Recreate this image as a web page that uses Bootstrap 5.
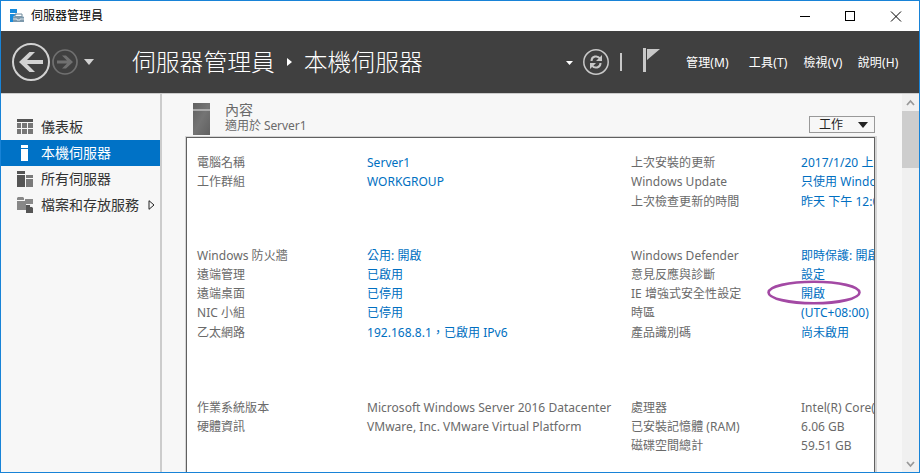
<!DOCTYPE html>
<html lang="zh-Hant">
<head>
<meta charset="utf-8">
<meta name="viewport" content="width=device-width, initial-scale=1">
<title>伺服器管理員</title>
<link href="https://cdn.jsdelivr.net/npm/bootstrap@5.3.0/dist/css/bootstrap.min.css" rel="stylesheet">
<style>
html,body{height:100%}
body{font-family:"Noto Sans","Noto Sans CJK TC",sans-serif;font-size:12px;line-height:19px;color:#6a6a6a;overflow:hidden;white-space:nowrap}
svg{display:block;flex:none}
.window{width:920px;height:473px;border:1px solid #1883d7;background:#f7f7f7}
.titlebar{height:30px;background:#fff;color:#000;padding:0 17px 0 9px}
.caption-text{margin-left:6px;position:relative;top:-1px}
.toolbar{height:62px;background:#404040;color:#fff;padding-left:10px}
.crumb{font-size:23.8px;font-weight:300;line-height:36px}
.crumb-first{margin-left:37px}
.crumb-arrow{margin:0 11px 0 12px}
.tool-icons{margin-right:2px}
.menus{width:256px}
.menus a{color:#fff;text-decoration:none;letter-spacing:.15px}
.m-a{margin-left:23px}.m-b{margin-left:20px}.m-c{margin-left:16px}.m-d{margin-left:15px}
.main{border-top:1px solid #ccc;min-height:0}
.side{width:161px;border-right:2px solid #ccc;padding-top:20px}
.side .nav-link{height:26px;padding:0 0 0 15px;color:#333;border-radius:0;line-height:26px;font-size:14px}
.side .nav-link span{margin-left:7px}
.side .nav-link.active{background:#0072c6;color:#fff}
.expand-arrow{margin-left:9px}
.content-area{padding:8px 25px 0 23px;min-width:0}
.heading{height:34px}
.heading-icon{margin-left:8px}
.heading-text{margin-left:15px}
.heading-title{font-size:14px;line-height:16px}
.heading-sub{line-height:16px;letter-spacing:-.06px}
.tasks{width:66px;height:17px;border:1px solid #999;border-radius:0;padding:0 5px 0 9px;font-size:12px;line-height:15px;color:#222;background:#f7f7f7;margin:0 2px 3px 0}
.panel-outer{border:1px solid #d5d5d5;border-width:1px 2px 0 1px;min-height:0}
.panel-inner{border:1px solid #606060;border-bottom:0;background:#fff;height:100%;padding:15px 0 0 10px;overflow:hidden}
.props{display:grid;grid-template-columns:170px 264px 170px 1fr;grid-auto-rows:19.3px;line-height:19px}
.props>*{min-width:0;height:19px;letter-spacing:.03px}
.props.first{height:92.5px}
.props.second{height:152px}
.props a{color:#006fc1;text-decoration:none}
.scroller{width:17px;background:#f0f0f0}
.thumb{height:57px;background:#cdcdcd}
.marker{position:absolute;left:765px;top:279px}
</style>
</head>
<body>
<div class="window d-flex flex-column position-relative">
  <header class="titlebar d-flex align-items-center flex-shrink-0">
    <svg width="15" height="15" viewBox="0 0 15 15"><path d="M0 0h7v4H0z" fill="#178bdc"/><path d="M0 5h7l-4 3v5H0z" fill="#178bdc"/><path d="M5 7V5h7v2" fill="none" stroke="#708b9d"/><path d="M3 8l2-1h7l2 1v5H3z" fill="#7c98ab"/><path d="M3 10h4v1h3v-1h4" fill="none" stroke="#d9e2e8"/></svg>
    <span class="caption-text">伺服器管理員</span>
    <svg class="ms-auto" width="102" height="11" viewBox="0 0 102 11" fill="none" stroke="#000"><path d="M0 5.500h10M45.500.500h9v9h-9z" shape-rendering="crispEdges"/><path d="M91 .5l10 10M101 .5l-10 10"/></svg>
  </header>
  <nav class="toolbar d-flex align-items-center flex-shrink-0">
    <svg width="84" height="40" viewBox="0 0 84 40" fill="none"><circle cx="20" cy="20" r="18" stroke="#d2d2d2" stroke-width="2"/><path d="M32 18v4H16l8 8h-5.500L8 20l10.500-10H24l-8 8z" fill="#d2d2d2"/><circle cx="54" cy="20" r="12" stroke="#707070" stroke-width="1.700"/><path d="M46 18.500v3h10l-5 5h4l7-6.500-7-6.500h-4l5 5z" fill="#707070"/><path d="M73 17h10l-5 6z" fill="#d2d2d2"/></svg>
    <span class="crumb crumb-first">伺服器管理員</span>
    <svg class="crumb-arrow" width="6" height="10" viewBox="0 0 6 10"><path d="M0 1v8l5-4z" fill="#fff"/></svg>
    <span class="crumb">本機伺服器</span>
    <div class="d-flex align-items-center ms-auto">
      <svg class="tool-icons" width="98" height="30" viewBox="0 0 98 30" fill="none"><path d="M3 14h7l-3.500 4z" fill="#fff"/><circle cx="33" cy="15" r="12.200" stroke="#c8c8c8" stroke-width="1.500"/><path d="M28.500 14c0-5 6-6 8.500-2.500M37.500 16c0 5-6 6-8.500 2.500" stroke="#c8c8c8" stroke-width="2"/><path d="M39 8v6h-6zM27 22v-6h6z" fill="#c8c8c8"/><path d="M57 6h2v18h-2zM80 1h3v24h-3zM84 2h13L84 13z" fill="#c8c8c8"/></svg>
      <div class="menus d-flex"><a class="m-a" href="#">管理(M)</a><a class="m-b" href="#">工具(T)</a><a class="m-c" href="#">檢視(V)</a><a class="m-d" href="#">說明(H)</a></div>
    </div>
  </nav>
  <div class="main d-flex flex-grow-1">
    <aside class="side flex-shrink-0">
      <div class="nav nav-pills flex-column">
        <a class="nav-link d-flex align-items-center" href="#"><svg width="18" height="16" viewBox="0 0 18 16" shape-rendering="crispEdges"><path fill="#555" d="M1 0h16v3H1z"/><path fill="#777" d="M1 4h4v5H1zM6 4h5v5H6zM12 4h5v5h-5zM1 10h4v5H1zM6 10h5v5H6zM12 10h5v5h-5z"/></svg><span>儀表板</span></a>
        <a class="nav-link active d-flex align-items-center" href="#"><svg width="18" height="16" viewBox="0 0 18 16"><path fill="#fff" d="M5 0h7v3H5zM5 4h7v12H5z"/></svg><span>本機伺服器</span></a>
        <a class="nav-link d-flex align-items-center" href="#"><svg width="18" height="16" viewBox="0 0 18 16"><path fill="#555" d="M1 0h8v3H1zM1 4h8v12H1z"/><path fill="#7a7a7a" d="M10 4h7v3h-7zM10 8h7v8h-7z"/></svg><span>所有伺服器</span></a>
        <a class="nav-link d-flex align-items-center" href="#"><svg width="18" height="16" viewBox="0 0 18 16"><path fill="#888" d="M1 1l1-1h5l1 1v2H1zM1 4h8V2h8v5h-7v6H1z"/><path fill="#555" d="M10 8h4l3 3v5h-7z"/><path d="M14 7v3h3z" fill="#eee"/></svg><span>檔案和存放服務</span><svg class="expand-arrow" width="8" height="10" viewBox="0 0 8 10"><path d="M1 .7v8.600l5-4.300z" fill="none" stroke="#222"/></svg></a>
      </div>
    </aside>
    <main class="content-area flex-grow-1 d-flex flex-column">
      <div class="heading d-flex flex-shrink-0">
        <svg class="heading-icon align-self-end" width="17" height="33" viewBox="0 0 17 33"><defs><linearGradient id="server-face" x2="1" y2="1"><stop stop-color="#606060"/><stop offset=".5" stop-color="#747474"/><stop offset="1" stop-color="#606060"/></linearGradient></defs><path fill="url(#server-face)" d="M0 0h17v32H0z"/><path fill="#aaa" d="M0 6h17v2H0z"/></svg>
        <div class="heading-text"><div class="heading-title">內容</div><div class="heading-sub pt-0 mt-0">適用於 Server1</div></div>
        <button class="tasks btn d-flex align-items-center justify-content-between ms-auto align-self-end" type="button"><span>工作</span><svg width="12" height="6" viewBox="0 0 12 6"><path d="M1 0h10L6 6z" fill="#222"/></svg></button>
      </div>
      <section class="panel-outer flex-grow-1"><div class="panel-inner">
        <div class="props first">
          <span>電腦名稱</span><a href="#">Server1</a><span>上次安裝的更新</span><a href="#">2017/1/20 上午</a>
          <span>工作群組</span><a href="#">WORKGROUP</a><span>Windows Update</span><a href="#">只使用 Windows</a>
          <span></span><span></span><span>上次檢查更新的時間</span><a href="#">昨天 下午 12:00</a>
        </div>
        <div class="props second">
          <span>Windows 防火牆</span><a href="#">公用: 開啟</a><span>Windows Defender</span><a href="#">即時保護: 開啟</a>
          <span>遠端管理</span><a href="#">已啟用</a><span>意見反應與診斷</span><a href="#">設定</a>
          <span>遠端桌面</span><a href="#">已停用</a><span>IE 增強式安全性設定</span><a href="#">開啟</a>
          <span>NIC 小組</span><a href="#">已停用</a><span>時區</span><a href="#">(UTC+08:00)</a>
          <span>乙太網路</span><a href="#">192.168.8.1，已啟用 IPv6</a><span>產品識別碼</span><a href="#">尚未啟用</a>
        </div>
        <div class="props">
          <span>作業系統版本</span><span>Microsoft Windows Server 2016 Datacenter</span><span>處理器</span><span>Intel(R) Core(TM)</span>
          <span>硬體資訊</span><span>VMware, Inc. VMware Virtual Platform</span><span>已安裝記憶體 (RAM)</span><span>6.06 GB</span>
          <span></span><span></span><span>磁碟空間總計</span><span>59.51 GB</span>
        </div>
      </div></section>
    </main>
    <div class="scroller d-flex flex-column flex-shrink-0">
      <svg width="17" height="17" viewBox="0 0 17 17"><path d="M5 11l3.500-4 3.500 4" fill="none" stroke="#999" stroke-width="1.800"/></svg>
      <div class="thumb"></div>
      <svg class="mt-auto" width="17" height="17" viewBox="0 0 17 17"><path d="M5 7l3.500 4L12 7" fill="none" stroke="#999" stroke-width="1.800"/></svg>
    </div>
  </div>
  <svg class="marker" width="96" height="26" viewBox="0 0 96 26"><ellipse cx="48" cy="12.500" rx="45.500" ry="10.800" fill="none" stroke="#a349a4" stroke-width="2.600"/></svg>
</div>
<script src="https://cdn.jsdelivr.net/npm/bootstrap@5.3.0/dist/js/bootstrap.bundle.min.js"></script>
</body>
</html>
